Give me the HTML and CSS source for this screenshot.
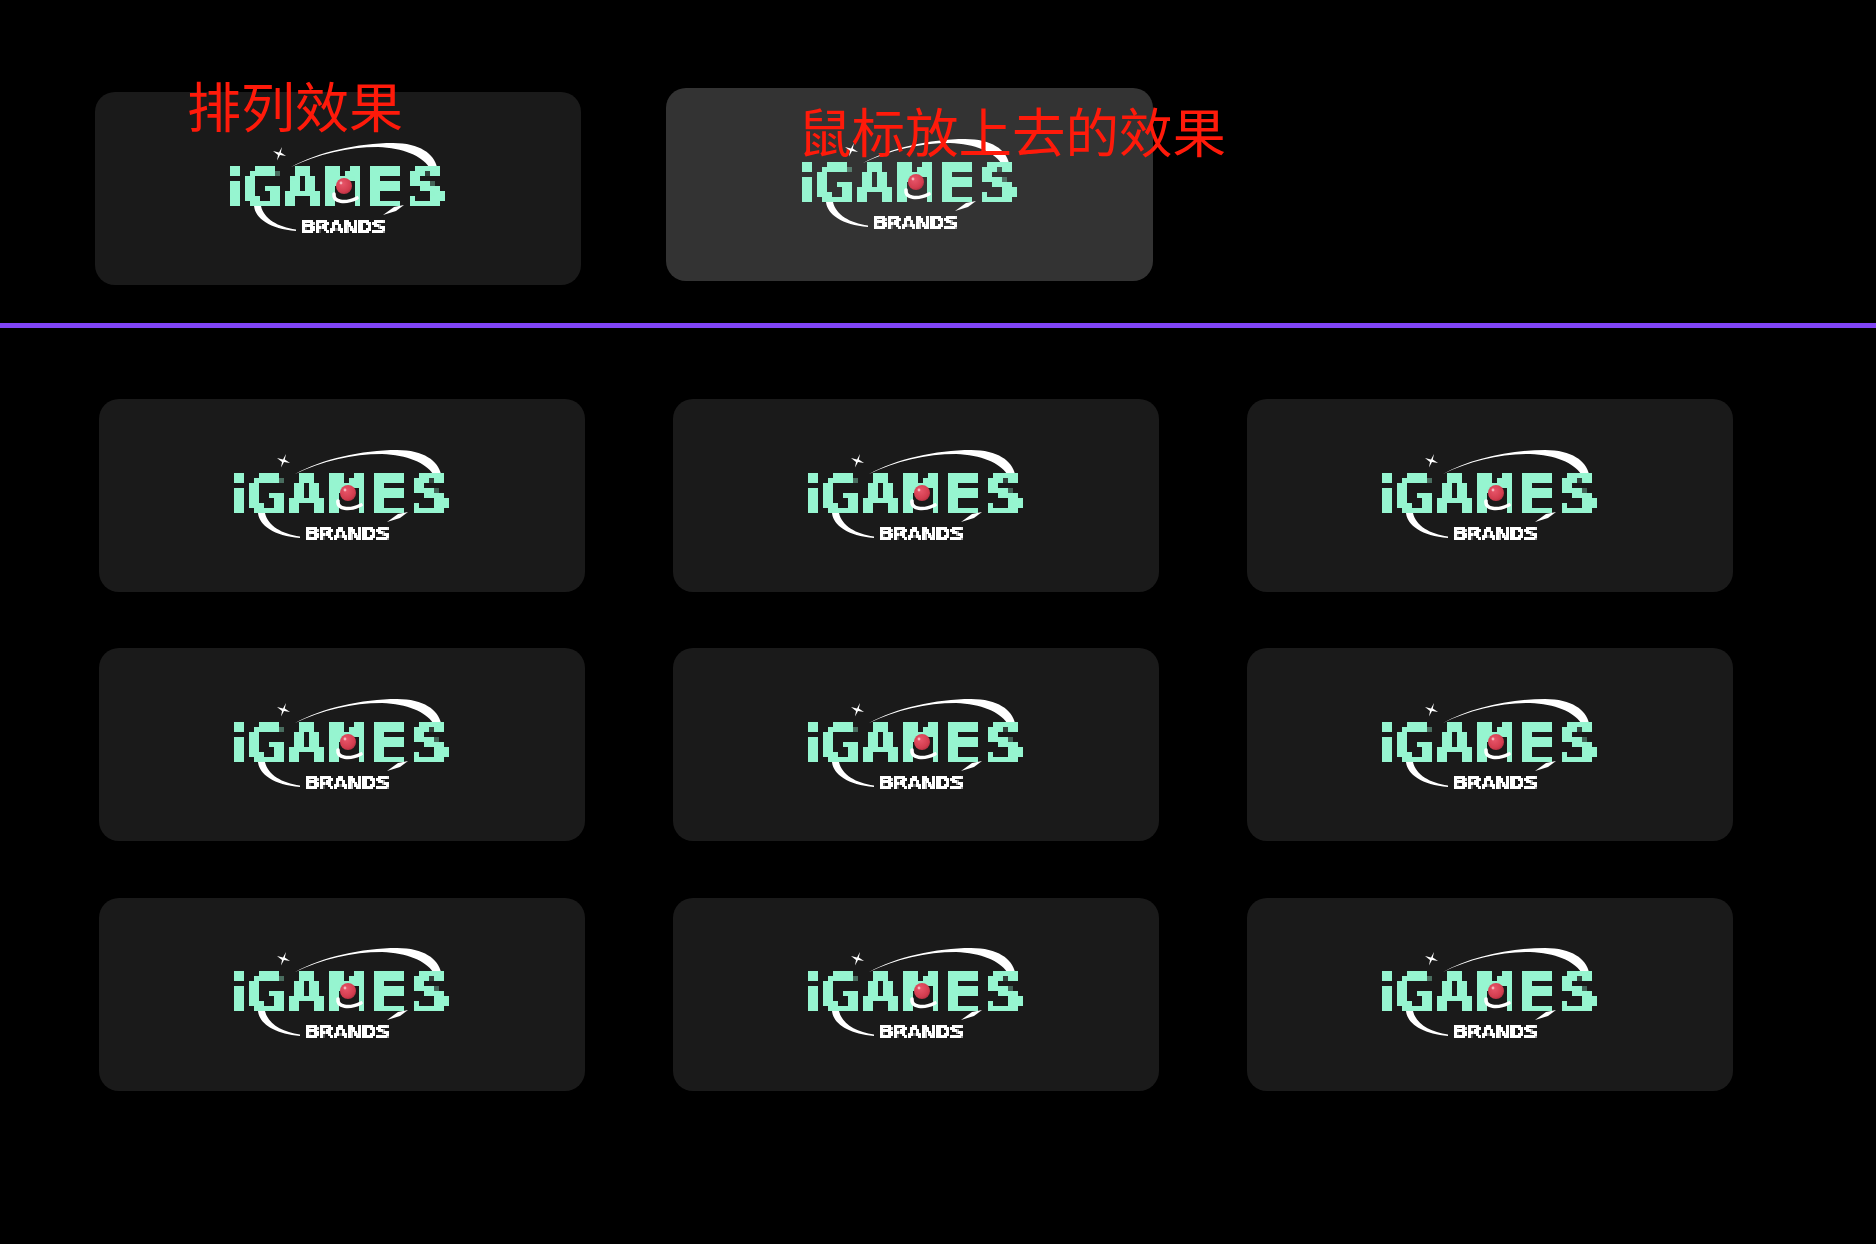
FILE: index.html
```html
<!DOCTYPE html>
<html lang="zh">
<head>
<meta charset="utf-8">
<title>iGAMES Brands</title>
<link rel="stylesheet" href="styles.css">
</head>
<body>
<svg class="defs" width="0" height="0" aria-hidden="true">
  <defs>
    <filter id="px5" filterUnits="userSpaceOnUse" primitiveUnits="userSpaceOnUse" x="0" y="0" width="260" height="130" color-interpolation-filters="sRGB">
      <feFlood x="4" y="4" width="1" height="1" flood-color="#000"/>
      <feComposite x="2" y="2" width="5" height="5"/>
      <feTile x="0" y="0" width="260" height="130" result="grid"/>
      <feComposite in="SourceGraphic" in2="grid" operator="in"/>
      <feComponentTransfer><feFuncA type="linear" slope="5" intercept="-1.5"/></feComponentTransfer>
      <feMorphology operator="dilate" radius="2"/>
      <feGaussianBlur stdDeviation="0.35"/>
    </filter>
    <filter id="px2" filterUnits="userSpaceOnUse" primitiveUnits="userSpaceOnUse" x="0" y="0" width="260" height="130" color-interpolation-filters="sRGB">
      <feFlood x="1" y="1" width="1" height="1" flood-color="#000"/>
      <feComposite x="0" y="0" width="2" height="2"/>
      <feTile x="0" y="0" width="260" height="130" result="grid"/>
      <feComposite in="SourceGraphic" in2="grid" operator="in"/>
      <feComponentTransfer><feFuncA type="linear" slope="5" intercept="-1.2"/></feComponentTransfer>
      <feMorphology operator="dilate" radius="1"/>
      <feGaussianBlur stdDeviation="0.25"/>
    </filter>
    <radialGradient id="ball" cx="0.4" cy="0.35" r="0.75">
      <stop offset="0" stop-color="#e8566a"/>
      <stop offset="0.7" stop-color="#d23c4e"/>
      <stop offset="1" stop-color="#a82a3c"/>
    </radialGradient>
  </defs>
</svg>

<section class="demo">
  <h2 class="note note-layout">排列效果</h2>
  <h2 class="note note-hover">鼠标放上去的效果</h2>
  <div class="card"><svg class="logo" viewBox="0 0 260 130" width="260" height="130"><path class="sw" d="M83 43C110 28 150 19 185 19C212 19 226 30 229 43L221 43C214 32 195 24 170 23C140 23 110 30 83 43Z"/><path class="sw" d="M46 82C47 94 62 105 88 107L88 105.5C70 103 56 95 53 82Z"/><path class="sw" d="M175 91L188 87L196 81L186 83Z"/><path class="sw" d="M74 23L72.8 28.5L78 32L72 31L69 36.5L70 31L65 27L71 28.5Z"/><g filter="url(#px5)"><text class="word" transform="translate(0 82) scale(1.18 .93)"><tspan class="word-i" x="15">i</tspan><tspan x="28">GAMES</tspan></text></g><path class="smile" d="M126 70C125 78 137 80 149 74"/><circle cx="136" cy="62" r="8" fill="url(#ball)"/><circle cx="133" cy="59" r="1.4" fill="#f5b5bd"/><text class="sub" x="93" y="109" textLength="85" lengthAdjust="spacingAndGlyphs" filter="url(#px2)">BRANDS</text></svg></div>
  <div class="card is-hover"><svg class="logo" viewBox="0 0 260 130" width="260" height="130"><path class="sw" d="M83 43C110 28 150 19 185 19C212 19 226 30 229 43L221 43C214 32 195 24 170 23C140 23 110 30 83 43Z"/><path class="sw" d="M46 82C47 94 62 105 88 107L88 105.5C70 103 56 95 53 82Z"/><path class="sw" d="M175 91L188 87L196 81L186 83Z"/><path class="sw" d="M74 23L72.8 28.5L78 32L72 31L69 36.5L70 31L65 27L71 28.5Z"/><g filter="url(#px5)"><text class="word" transform="translate(0 82) scale(1.18 .93)"><tspan class="word-i" x="15">i</tspan><tspan x="28">GAMES</tspan></text></g><path class="smile" d="M126 70C125 78 137 80 149 74"/><circle cx="136" cy="62" r="8" fill="url(#ball)"/><circle cx="133" cy="59" r="1.4" fill="#f5b5bd"/><text class="sub" x="93" y="109" textLength="85" lengthAdjust="spacingAndGlyphs" filter="url(#px2)">BRANDS</text></svg></div>
</section>

<hr class="rule">

<section class="grid">
  <div class="card"><svg class="logo" viewBox="0 0 260 130" width="260" height="130"><path class="sw" d="M83 43C110 28 150 19 185 19C212 19 226 30 229 43L221 43C214 32 195 24 170 23C140 23 110 30 83 43Z"/><path class="sw" d="M46 82C47 94 62 105 88 107L88 105.5C70 103 56 95 53 82Z"/><path class="sw" d="M175 91L188 87L196 81L186 83Z"/><path class="sw" d="M74 23L72.8 28.5L78 32L72 31L69 36.5L70 31L65 27L71 28.5Z"/><g filter="url(#px5)"><text class="word" transform="translate(0 82) scale(1.18 .93)"><tspan class="word-i" x="15">i</tspan><tspan x="28">GAMES</tspan></text></g><path class="smile" d="M126 70C125 78 137 80 149 74"/><circle cx="136" cy="62" r="8" fill="url(#ball)"/><circle cx="133" cy="59" r="1.4" fill="#f5b5bd"/><text class="sub" x="93" y="109" textLength="85" lengthAdjust="spacingAndGlyphs" filter="url(#px2)">BRANDS</text></svg></div>
  <div class="card"><svg class="logo" viewBox="0 0 260 130" width="260" height="130"><path class="sw" d="M83 43C110 28 150 19 185 19C212 19 226 30 229 43L221 43C214 32 195 24 170 23C140 23 110 30 83 43Z"/><path class="sw" d="M46 82C47 94 62 105 88 107L88 105.5C70 103 56 95 53 82Z"/><path class="sw" d="M175 91L188 87L196 81L186 83Z"/><path class="sw" d="M74 23L72.8 28.5L78 32L72 31L69 36.5L70 31L65 27L71 28.5Z"/><g filter="url(#px5)"><text class="word" transform="translate(0 82) scale(1.18 .93)"><tspan class="word-i" x="15">i</tspan><tspan x="28">GAMES</tspan></text></g><path class="smile" d="M126 70C125 78 137 80 149 74"/><circle cx="136" cy="62" r="8" fill="url(#ball)"/><circle cx="133" cy="59" r="1.4" fill="#f5b5bd"/><text class="sub" x="93" y="109" textLength="85" lengthAdjust="spacingAndGlyphs" filter="url(#px2)">BRANDS</text></svg></div>
  <div class="card"><svg class="logo" viewBox="0 0 260 130" width="260" height="130"><path class="sw" d="M83 43C110 28 150 19 185 19C212 19 226 30 229 43L221 43C214 32 195 24 170 23C140 23 110 30 83 43Z"/><path class="sw" d="M46 82C47 94 62 105 88 107L88 105.5C70 103 56 95 53 82Z"/><path class="sw" d="M175 91L188 87L196 81L186 83Z"/><path class="sw" d="M74 23L72.8 28.5L78 32L72 31L69 36.5L70 31L65 27L71 28.5Z"/><g filter="url(#px5)"><text class="word" transform="translate(0 82) scale(1.18 .93)"><tspan class="word-i" x="15">i</tspan><tspan x="28">GAMES</tspan></text></g><path class="smile" d="M126 70C125 78 137 80 149 74"/><circle cx="136" cy="62" r="8" fill="url(#ball)"/><circle cx="133" cy="59" r="1.4" fill="#f5b5bd"/><text class="sub" x="93" y="109" textLength="85" lengthAdjust="spacingAndGlyphs" filter="url(#px2)">BRANDS</text></svg></div>
  <div class="card"><svg class="logo" viewBox="0 0 260 130" width="260" height="130"><path class="sw" d="M83 43C110 28 150 19 185 19C212 19 226 30 229 43L221 43C214 32 195 24 170 23C140 23 110 30 83 43Z"/><path class="sw" d="M46 82C47 94 62 105 88 107L88 105.5C70 103 56 95 53 82Z"/><path class="sw" d="M175 91L188 87L196 81L186 83Z"/><path class="sw" d="M74 23L72.8 28.5L78 32L72 31L69 36.5L70 31L65 27L71 28.5Z"/><g filter="url(#px5)"><text class="word" transform="translate(0 82) scale(1.18 .93)"><tspan class="word-i" x="15">i</tspan><tspan x="28">GAMES</tspan></text></g><path class="smile" d="M126 70C125 78 137 80 149 74"/><circle cx="136" cy="62" r="8" fill="url(#ball)"/><circle cx="133" cy="59" r="1.4" fill="#f5b5bd"/><text class="sub" x="93" y="109" textLength="85" lengthAdjust="spacingAndGlyphs" filter="url(#px2)">BRANDS</text></svg></div>
  <div class="card"><svg class="logo" viewBox="0 0 260 130" width="260" height="130"><path class="sw" d="M83 43C110 28 150 19 185 19C212 19 226 30 229 43L221 43C214 32 195 24 170 23C140 23 110 30 83 43Z"/><path class="sw" d="M46 82C47 94 62 105 88 107L88 105.5C70 103 56 95 53 82Z"/><path class="sw" d="M175 91L188 87L196 81L186 83Z"/><path class="sw" d="M74 23L72.8 28.5L78 32L72 31L69 36.5L70 31L65 27L71 28.5Z"/><g filter="url(#px5)"><text class="word" transform="translate(0 82) scale(1.18 .93)"><tspan class="word-i" x="15">i</tspan><tspan x="28">GAMES</tspan></text></g><path class="smile" d="M126 70C125 78 137 80 149 74"/><circle cx="136" cy="62" r="8" fill="url(#ball)"/><circle cx="133" cy="59" r="1.4" fill="#f5b5bd"/><text class="sub" x="93" y="109" textLength="85" lengthAdjust="spacingAndGlyphs" filter="url(#px2)">BRANDS</text></svg></div>
  <div class="card"><svg class="logo" viewBox="0 0 260 130" width="260" height="130"><path class="sw" d="M83 43C110 28 150 19 185 19C212 19 226 30 229 43L221 43C214 32 195 24 170 23C140 23 110 30 83 43Z"/><path class="sw" d="M46 82C47 94 62 105 88 107L88 105.5C70 103 56 95 53 82Z"/><path class="sw" d="M175 91L188 87L196 81L186 83Z"/><path class="sw" d="M74 23L72.8 28.5L78 32L72 31L69 36.5L70 31L65 27L71 28.5Z"/><g filter="url(#px5)"><text class="word" transform="translate(0 82) scale(1.18 .93)"><tspan class="word-i" x="15">i</tspan><tspan x="28">GAMES</tspan></text></g><path class="smile" d="M126 70C125 78 137 80 149 74"/><circle cx="136" cy="62" r="8" fill="url(#ball)"/><circle cx="133" cy="59" r="1.4" fill="#f5b5bd"/><text class="sub" x="93" y="109" textLength="85" lengthAdjust="spacingAndGlyphs" filter="url(#px2)">BRANDS</text></svg></div>
  <div class="card"><svg class="logo" viewBox="0 0 260 130" width="260" height="130"><path class="sw" d="M83 43C110 28 150 19 185 19C212 19 226 30 229 43L221 43C214 32 195 24 170 23C140 23 110 30 83 43Z"/><path class="sw" d="M46 82C47 94 62 105 88 107L88 105.5C70 103 56 95 53 82Z"/><path class="sw" d="M175 91L188 87L196 81L186 83Z"/><path class="sw" d="M74 23L72.8 28.5L78 32L72 31L69 36.5L70 31L65 27L71 28.5Z"/><g filter="url(#px5)"><text class="word" transform="translate(0 82) scale(1.18 .93)"><tspan class="word-i" x="15">i</tspan><tspan x="28">GAMES</tspan></text></g><path class="smile" d="M126 70C125 78 137 80 149 74"/><circle cx="136" cy="62" r="8" fill="url(#ball)"/><circle cx="133" cy="59" r="1.4" fill="#f5b5bd"/><text class="sub" x="93" y="109" textLength="85" lengthAdjust="spacingAndGlyphs" filter="url(#px2)">BRANDS</text></svg></div>
  <div class="card"><svg class="logo" viewBox="0 0 260 130" width="260" height="130"><path class="sw" d="M83 43C110 28 150 19 185 19C212 19 226 30 229 43L221 43C214 32 195 24 170 23C140 23 110 30 83 43Z"/><path class="sw" d="M46 82C47 94 62 105 88 107L88 105.5C70 103 56 95 53 82Z"/><path class="sw" d="M175 91L188 87L196 81L186 83Z"/><path class="sw" d="M74 23L72.8 28.5L78 32L72 31L69 36.5L70 31L65 27L71 28.5Z"/><g filter="url(#px5)"><text class="word" transform="translate(0 82) scale(1.18 .93)"><tspan class="word-i" x="15">i</tspan><tspan x="28">GAMES</tspan></text></g><path class="smile" d="M126 70C125 78 137 80 149 74"/><circle cx="136" cy="62" r="8" fill="url(#ball)"/><circle cx="133" cy="59" r="1.4" fill="#f5b5bd"/><text class="sub" x="93" y="109" textLength="85" lengthAdjust="spacingAndGlyphs" filter="url(#px2)">BRANDS</text></svg></div>
  <div class="card"><svg class="logo" viewBox="0 0 260 130" width="260" height="130"><path class="sw" d="M83 43C110 28 150 19 185 19C212 19 226 30 229 43L221 43C214 32 195 24 170 23C140 23 110 30 83 43Z"/><path class="sw" d="M46 82C47 94 62 105 88 107L88 105.5C70 103 56 95 53 82Z"/><path class="sw" d="M175 91L188 87L196 81L186 83Z"/><path class="sw" d="M74 23L72.8 28.5L78 32L72 31L69 36.5L70 31L65 27L71 28.5Z"/><g filter="url(#px5)"><text class="word" transform="translate(0 82) scale(1.18 .93)"><tspan class="word-i" x="15">i</tspan><tspan x="28">GAMES</tspan></text></g><path class="smile" d="M126 70C125 78 137 80 149 74"/><circle cx="136" cy="62" r="8" fill="url(#ball)"/><circle cx="133" cy="59" r="1.4" fill="#f5b5bd"/><text class="sub" x="93" y="109" textLength="85" lengthAdjust="spacingAndGlyphs" filter="url(#px2)">BRANDS</text></svg></div>
</section>
</body>
</html>
```
FILE: styles.css
```css
html, body { margin: 0; padding: 0; background: #000; }
body { width: 1876px; height: 1244px; overflow: hidden; position: relative; font-family: "Noto Sans CJK SC", sans-serif; }
.defs { position: absolute; }
.demo { display: flex; gap: 85px; padding: 92px 0 38px 95px; }
.card { width: 486.4px; height: 193px; flex: none; border-radius: 20px; background: #1a1a1a; display: flex; align-items: center; justify-content: center; }
.card.is-hover { background: #333333; transform: translateY(-4px); }
.logo { display: block; flex: none; }
.sw { fill: #fff; }
.smile { fill: none; stroke: #fff; stroke-width: 3.6; stroke-linecap: round; }
.word { font-family: "DejaVu Sans Mono", monospace; font-weight: 700; font-size: 58px; fill: #96f5d0; stroke: #96f5d0; stroke-width: 0.6px; }
.word-i { font-family: "DejaVu Sans", sans-serif; font-size: 54px; stroke-width: 0; }
.sub { font-family: "DejaVu Sans Mono", monospace; font-weight: 400; font-size: 18px; fill: #fff; }
.rule { height: 5px; margin: 0; border: 0; background: #8044f5; }
.grid { display: grid; grid-template-columns: repeat(3, 486.4px); column-gap: 87.6px; row-gap: 56.4px; padding: 71px 0 0 99px; }
.note { position: absolute; margin: 0; font-size: 53.5px; line-height: 1; font-weight: 400; color: #ff1a0a; white-space: nowrap; z-index: 2; }
.note-layout { left: 187px; top: 78px; font-size: 54px; }
.note-hover { left: 798px; top: 103px; }
```
